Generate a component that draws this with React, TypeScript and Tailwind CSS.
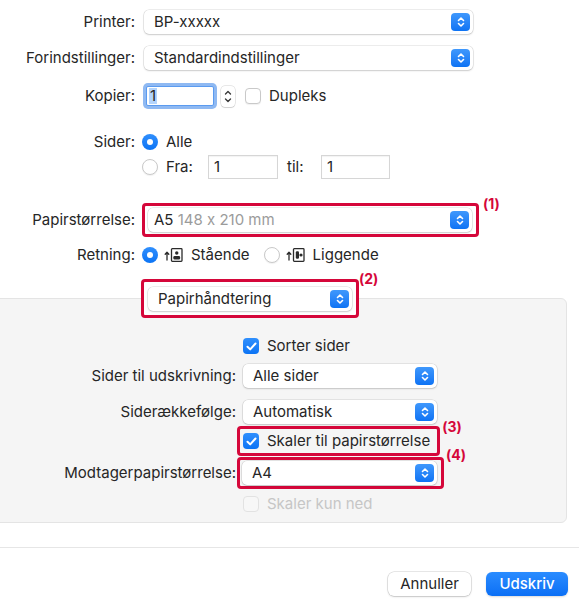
import type { ReactNode } from "react"

const RED = "border-[#d5073a]"

function Chevrons() {
  return (
    <svg width="8" height="12" viewBox="0 0 8 12" fill="none" stroke="currentColor" strokeWidth="1.6" strokeLinecap="round" strokeLinejoin="round">
      <path d="M1.5 4.5 4 2l2.5 2.5" />
      <path d="M1.5 7.5 4 10l2.5-2.5" />
    </svg>
  )
}

const Popup = ({ children, className = "" }: { children: ReactNode, className?: string }) => (
  <div className={`flex h-[24px] shrink-0 items-center justify-between rounded-[5px] bg-white pl-[10px] pr-[3px] shadow-[0_0_0_0.5px_rgba(0,0,0,0.14),0_1px_2px_rgba(0,0,0,0.14)] ${className}`}>
    <span className="text-[15px] text-[#262626]">{children}</span>
    <span className="flex h-[18px] w-[19px] items-center justify-center rounded-[4px] bg-gradient-to-b from-[#3f98fc] to-[#0c73f4] text-white">
      <Chevrons />
    </span>
  </div>
)

const Checkbox = ({ checked = false, disabled = false }: { checked?: boolean, disabled?: boolean }) => {
  if (checked) {
    return (
      <span className="flex h-[16px] w-[16px] shrink-0 items-center justify-center rounded-[4px] bg-gradient-to-b from-[#2f8ffd] to-[#0a74f5]">
        <svg width="11" height="9" viewBox="0 0 11 9" fill="none" stroke="white" strokeWidth="2" strokeLinecap="round" strokeLinejoin="round">
          <path d="M1.5 4.8 4.2 7.4 9.5 1.5" />
        </svg>
      </span>
    )
  }
  return (
    <span className={`block h-[16px] w-[16px] shrink-0 rounded-[4px] border ${disabled ? "border-[#e2e2e2] bg-[#f7f7f7]" : "border-[#c9c9c9] bg-white shadow-[0_1px_1px_rgba(0,0,0,0.06)]"}`} />
  )
}

const Radio = ({ checked = false }: { checked?: boolean }) =>
  checked ? (
    <span className="flex h-[16px] w-[16px] shrink-0 items-center justify-center rounded-full bg-gradient-to-b from-[#2f8ffd] to-[#0a74f5]">
      <span className="h-[6px] w-[6px] rounded-full bg-white" />
    </span>
  ) : (
    <span className="block h-[16px] w-[16px] shrink-0 rounded-full border border-[#c9c9c9] bg-white shadow-[0_1px_1px_rgba(0,0,0,0.06)]" />
  )

const OrientIcon = ({ landscape = false }: { landscape?: boolean }) => (
  <svg width="19" height="14" viewBox="0 0 19 14" fill="none" className="block shrink-0">
    <path d="M3 12V4.5M1.2 6.3 3 4.3l1.8 2" stroke="#2b2b2b" strokeWidth="1.3" strokeLinecap="round" strokeLinejoin="round" />
    <rect x="7.5" y="0.7" width="10.5" height="12.6" rx="0.8" stroke="#2b2b2b" strokeWidth="1.3" />
    {landscape ? (
      <>
        <rect x="9.8" y="3.2" width="3.2" height="7.6" rx="1.2" fill="#2b2b2b" />
        <circle cx="15" cy="7" r="1.6" fill="#2b2b2b" />
      </>
    ) : (
      <>
        <circle cx="12.75" cy="5" r="1.7" fill="#2b2b2b" />
        <rect x="9.4" y="8" width="6.7" height="3.4" rx="1.2" fill="#2b2b2b" />
      </>
    )}
  </svg>
)

const TextField = ({ value, className = "" }: { value: string, className?: string }) => (
  <div className={`flex h-[24px] shrink-0 items-center border border-[#d6d6d6] bg-white pl-[5px] text-[15px] text-[#262626] shadow-[inset_0_1px_1px_rgba(0,0,0,0.05)] ${className}`}>
    {value}
  </div>
)

const Badge = ({ n, className }: { n: number, className: string }) => (
  <span className={`absolute text-[14px] font-bold leading-none text-[#d5073a] ${className}`}>({n})</span>
)

const Row = ({ label, labelWidth = "w-[135px]", className = "", children }: {
  label?: string,
  labelWidth?: string,
  className?: string,
  children: ReactNode
}) => (
  <div className={`flex items-center ${className}`}>
    <span className={`${labelWidth} shrink-0 whitespace-nowrap text-right text-[15px] text-[#262626]`}>{label}</span>
    <div className="ml-[7px] flex items-center">{children}</div>
  </div>
)

export default function App() {
  return (
    <div className="relative h-[611px] w-[579px] overflow-hidden bg-white font-['Inter','Liberation_Sans',sans-serif] antialiased [font-feature-settings:'calt'_0]">
      <div className="flex flex-col pt-[10px]">
        <Row label="Printer:" className="h-[24px]">
          <Popup className="ml-[2px] w-[329px]">BP-xxxxx</Popup>
        </Row>
        <Row label="Forindstillinger:" className="mt-[12px] h-[24px]">
          <Popup className="ml-[2px] w-[329px]">Standardindstillinger</Popup>
        </Row>

        <Row label="Kopier:" className="mt-[12px] h-[28px]">
          <div className="ml-[4px] flex h-[20px] w-[68px] items-center rounded-[2px] border border-[#5b9bf0] bg-white pl-[2px] ring-[3px] ring-[#8fb9f2] text-[15px] text-[#262626]">
            <span className="bg-[#b3d4fc] px-[1px] leading-[16px]">1</span>
          </div>
          <div className="ml-[7px] flex h-[21px] w-[14px] flex-col items-center justify-center rounded-[4px] bg-white text-[#3a3a3a] shadow-[0_0_0_0.5px_rgba(0,0,0,0.18),0_1px_1px_rgba(0,0,0,0.1)]">
            <svg width="8" height="15" viewBox="0 0 8 15" fill="none" stroke="currentColor" strokeWidth="1.4" strokeLinecap="round" strokeLinejoin="round">
              <path d="M1.5 5 4 2.5 6.5 5" />
              <path d="M1.5 10 4 12.5 6.5 10" />
            </svg>
          </div>
          <div className="ml-[10px] flex items-center gap-[8px]">
            <Checkbox />
            <span className="text-[15px] text-[#262626]">Dupleks</span>
          </div>
        </Row>

        <Row label="Sider:" className="mt-[20px] h-[24px]">
          <Radio checked />
          <span className="ml-[8px] text-[15px] text-[#262626]">Alle</span>
        </Row>
        <Row className="mt-[1px] h-[24px]">
          <div className="flex w-[66px] items-center">
            <Radio />
            <span className="ml-[8px] text-[15px] text-[#262626]">Fra:</span>
          </div>
          <TextField value="1" className="w-[70px]" />
          <span className="w-[43px] pl-[9px] text-[15px] text-[#262626]">til:</span>
          <TextField value="1" className="w-[69px]" />
        </Row>

        <Row label="Papirstørrelse:" className="mt-[24px] h-[34px]">
          <div className={`relative flex h-[34px] w-[337px] items-center rounded-[4px] border-[3px] ${RED} pl-[3px]`}>
            <div className="flex h-[24px] w-[324px] items-center justify-between rounded-[5px] bg-white pl-[6px] pr-[3px] shadow-[0_0_0_0.5px_rgba(0,0,0,0.14),0_1px_2px_rgba(0,0,0,0.14)]">
              <span className="text-[15px] text-[#262626]">A5 <span className="text-[#9b9b9b]">148 x 210 mm</span></span>
              <span className="flex h-[18px] w-[19px] items-center justify-center rounded-[4px] bg-gradient-to-b from-[#3f98fc] to-[#0c73f4] text-white">
                <Chevrons />
              </span>
            </div>
            <Badge n={1} className="left-full top-[-9px] ml-[7px]" />
          </div>
        </Row>

        <Row label="Retning:" className="mt-[6px] h-[24px]">
          <Radio checked />
          <span className="ml-[6px]"><OrientIcon /></span>
          <span className="ml-[8px] text-[15px] text-[#262626]">Stående</span>
          <span className="ml-[14px]"><Radio /></span>
          <span className="ml-[6px]"><OrientIcon landscape /></span>
          <span className="ml-[8px] text-[15px] text-[#262626]">Liggende</span>
        </Row>

        <Row className="relative z-10 mt-[12px] h-[39px]">
          <div className={`relative ml-[-1px] flex h-[39px] w-[218px] items-center rounded-[4px] border-[3px] ${RED} bg-white pl-[4px] pt-[1px]`}>
            <Popup className="w-[204px]">Papirhåndtering</Popup>
            <Badge n={2} className="left-full top-[-10px] ml-[3px]" />
          </div>
        </Row>

        <div className="ml-[-10px] mt-[-20px] h-[225px] w-[577px] rounded-[6px] border border-[#e4e4e4] bg-[#f5f5f5] pl-[9px]">
          <div className="flex flex-col pt-[35px]">
            <Row labelWidth="w-[236px]" className="h-[24px]">
              <Checkbox checked />
              <span className="ml-[8px] text-[15px] text-[#262626]">Sorter sider</span>
            </Row>
            <Row label="Sider til udskrivning:" labelWidth="w-[236px]" className="mt-[6px] h-[24px]">
              <Popup className="w-[194px]">Alle sider</Popup>
            </Row>
            <Row label="Siderækkefølge:" labelWidth="w-[236px]" className="mt-[12px] h-[24px]">
              <Popup className="w-[194px]">Automatisk</Popup>
            </Row>
            <Row labelWidth="w-[236px]" className="mt-[2px] h-[30px]">
              <div className={`relative ml-[-6px] flex h-[30px] items-center rounded-[4px] border-[3px] ${RED} pl-[3px] pr-[7px]`}>
                <Checkbox checked />
                <span className="ml-[8px] text-[15px] text-[#262626]">Skaler til papirstørrelse</span>
                <Badge n={3} className="left-full top-[-9px] ml-[5px]" />
              </div>
            </Row>
            <Row label="Modtagerpapirstørrelse:" labelWidth="w-[236px]" className="mt-[1px] h-[32px]">
              <div className={`relative ml-[-6px] flex h-[32px] w-[207px] items-center rounded-[4px] border-[3px] ${RED} pl-[2px]`}>
                <Popup className="w-[195px]">A4</Popup>
                <Badge n={4} className="left-full top-[-12px] ml-[5px]" />
              </div>
            </Row>
            <Row labelWidth="w-[236px]" className="mt-[3px] h-[24px]">
              <Checkbox disabled />
              <span className="ml-[8px] text-[15px] text-[#c6c6c6]">Skaler kun ned</span>
            </Row>
          </div>
        </div>

        <div className="mt-[24px] h-px w-full bg-[#e6e6e6]" />

        <div className="mt-[24px] flex h-[24px] justify-end gap-[15px] pr-[11px]">
          <button className="h-[24px] w-[83px] rounded-[6px] bg-white text-[15px] text-[#262626] shadow-[0_0_0_0.5px_rgba(0,0,0,0.18),0_1px_2px_rgba(0,0,0,0.15)]">
            Annuller
          </button>
          <button className="h-[24px] w-[82px] rounded-[6px] bg-gradient-to-b from-[#2a8cff] to-[#0a6ff5] text-[15px] font-medium text-white shadow-[0_1px_2px_rgba(0,0,0,0.15)]">
            Udskriv
          </button>
        </div>
      </div>
    </div>
  )
}
